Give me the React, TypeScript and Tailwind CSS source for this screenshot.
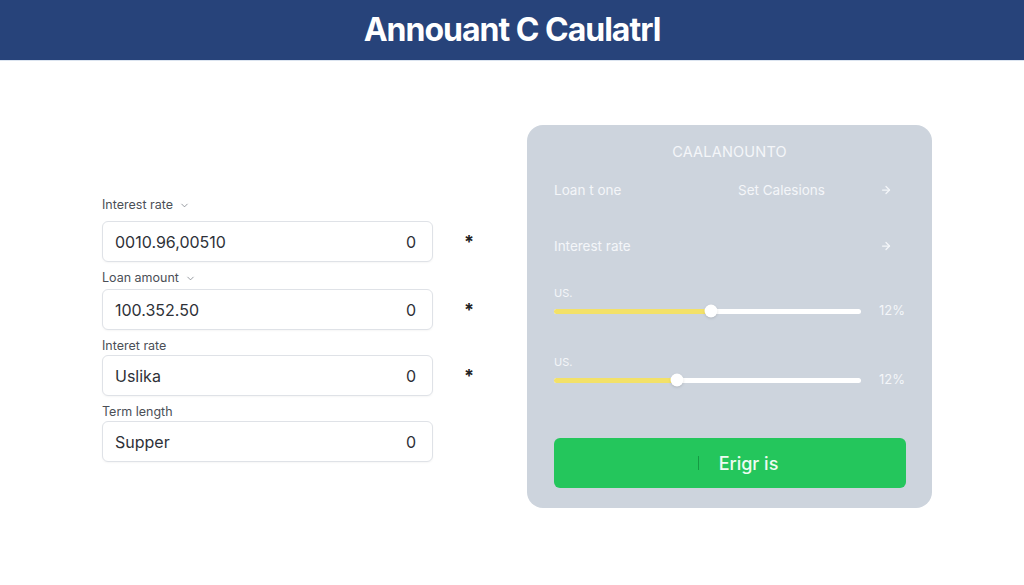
import { ChevronDown, ArrowRight } from "lucide-react"

function Field({ label, value, chevron, star, first, tight }: { label: string; value: string; chevron?: boolean; star?: boolean; first?: boolean; tight?: boolean }) {
    return (
        <div className={first ? "" : "mt-2"}>
            <div className={`flex items-center gap-1.5 text-[12.5px] leading-4 text-[#4b4f57] ${first ? "mb-2" : tight ? "mb-px" : "mb-[3px]"}`}>
                {label}
                {chevron && <ChevronDown size={11} strokeWidth={1.5} className="text-[#6b7079]" />}
            </div>
            <div className="flex items-center">
                <div className="flex h-[41px] w-[331px] items-center justify-between rounded-md border border-[#dfe2e7] bg-white px-3 text-[16px] text-[#2e3138] shadow-[0_1px_2px_rgba(0,0,0,0.04)]">
                    <span>{value}</span>
                    <span className="pr-1">0</span>
                </div>
                {star && <span className="ml-[31px] text-[18px] font-bold leading-none text-[#222]">*</span>}
            </div>
        </div>
    )
}

function Slider({ pct }: { pct: number }) {
    return (
        <div>
            <div className="text-[11px] leading-[14px] text-[#f4f6f9]">US.</div>
            <div className="mt-[3px] flex h-4 items-center">
                <div className="relative h-[5px] w-[308px] rounded-full bg-white">
                    <div className="h-full rounded-full bg-[#f3e168]" style={{ width: `${pct}%` }} />
                    <div className="absolute top-1/2 h-[13px] w-[13px] -translate-x-1/2 -translate-y-1/2 rounded-full bg-white shadow-sm" style={{ left: `${pct}%` }} />
                </div>
                <span className="ml-[18px] text-[13px] text-[#f4f6f9]">12%</span>
            </div>
        </div>
    )
}

export default function App() {
    return (
        <div className="min-h-[585px] bg-white font-['Inter',sans-serif]">
            <header className="flex h-[60px] items-center justify-center bg-[#27437a] shadow-[0_1px_0_#dbe4f0]">
                <h1 className="text-[32px] font-bold tracking-[-1px] text-white">Annouant C Caulatrl</h1>
            </header>
            <main className="flex items-start pl-[102px] pt-[65px]">
                <div className="mt-[72px] w-[425px]">
                    <Field label="Interest rate" value="0010.96,00510" chevron star first />
                    <Field label="Loan amount" value="100.352.50" chevron star />
                    <Field label="Interet rate" value="Uslika" star tight />
                    <Field label="Term length" value="Supper" tight />
                </div>
                <div className="flex h-[383px] w-[405px] flex-col rounded-2xl bg-[#cdd4dd] px-[27px] pt-[17px]">
                    <div className="text-center text-[14.5px] leading-5 tracking-[0.2px] text-[#f4f6f9]">CAALANOUNTO</div>
                    <div className="mt-[18px] flex h-5 items-center text-[13.5px] text-[#f4f6f9]">
                        <span className="w-[184px]">Loan t one</span>
                        <span className="flex-1">Set Calesions</span>
                        <ArrowRight size={12} strokeWidth={2.5} className="mr-[13px]" />
                    </div>
                    <div className="mt-9 flex h-5 items-center justify-between text-[13.5px] text-[#f4f6f9]">
                        <span>Interest rate</span>
                        <ArrowRight size={12} strokeWidth={2.5} className="mr-[13px]" />
                    </div>
                    <div className="mt-[30px]">
                        <Slider pct={51} />
                    </div>
                    <div className="mt-9">
                        <Slider pct={40} />
                    </div>
                    <button className="mt-[50px] flex h-[50px] w-[352px] items-center justify-center rounded-md bg-[#24c65c] pl-4 text-[18px] font-medium text-[#eefbf2]">
                        <span className="h-[14px] w-px bg-[#159a43]" />
                        <span className="ml-5">Erigr is</span>
                    </button>
                </div>
            </main>
        </div>
    )
}
